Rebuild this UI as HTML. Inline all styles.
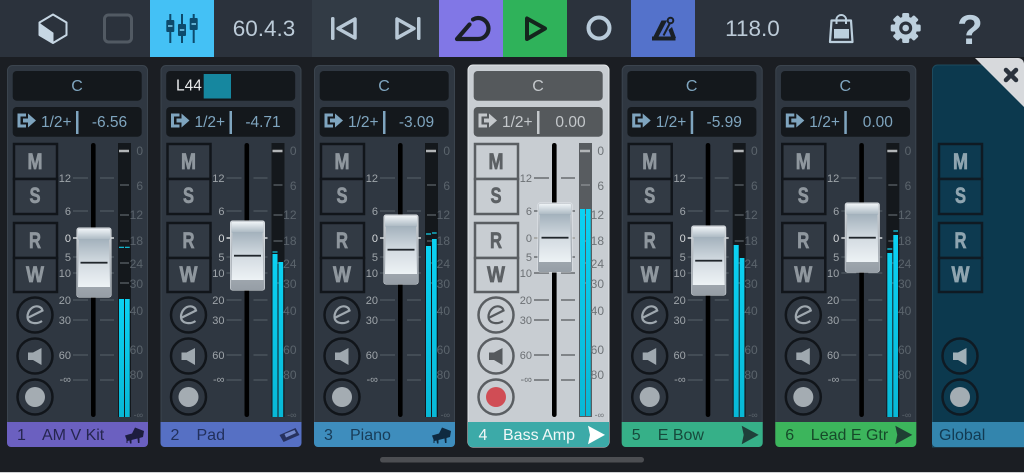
<!DOCTYPE html>
<html lang="en"><head><meta charset="utf-8"><title>Mixer</title>
<style>
html,body{margin:0;padding:0;background:#1b1e23;width:1024px;height:473px;overflow:hidden}
svg{display:block;font-family:"Liberation Sans",sans-serif}
.s{--bg:#2f3741;--edge:#3b444e;--box:#14181c;--txt:#7fa5bf;--tick:#4f5962;--z:#aeb3b7;--btn:#323a44;--ln:#11151a;--gl:#8f979e;--mtr:#14181c;--mt:#5c6369;--l:#9ea4a9;--r:#5b646c;--ic:#9fa8af;--bz:#a4acb2}
.sel{--bg:#c8cdd2;--edge:#e2e5e8;--box:#55595c;--txt:#c4c8cb;--tick:#54585c;--z:#a9aaa8;--btn:#c8cdd2;--ln:#5a5e62;--gl:#5c6064;--mtr:#585c60;--mt:#8f9396;--l:#6c7074;--r:#6f7478;--ic:#55595d;--bz:#d04d55}
.g{--bg:#0c394e;--edge:#1d4a5e;--btn:#0d3a50;--ln:#0f1a23;--gl:#8fa5b0;--ic:#9fb0b8;--bz:#a3adb3}
.l text{font-size:11px;fill:var(--l);text-anchor:end}
.r text{font-size:12px;fill:var(--r);text-anchor:end}
.c{font-size:16px;fill:var(--txt);text-anchor:middle}
.o{font-size:15.5px;fill:var(--txt)}
.v{font-size:15.5px;fill:var(--txt);text-anchor:middle}
.b text{font-size:22px;font-weight:bold;fill:var(--gl);stroke:var(--gl);stroke-width:.7px;text-anchor:middle}
.f{font-size:16px}
.tb{font-size:22.5px;fill:#bccbd8;text-anchor:middle}
</style></head><body>
<svg width="1024" height="473" viewBox="0 0 1024 473" xmlns="http://www.w3.org/2000/svg">
<defs>
<linearGradient id="gc" x1="0" y1="0" x2="0" y2="1"><stop offset="0" stop-color="#eef3f6"/><stop offset="1" stop-color="#a8b6c0"/></linearGradient>
<linearGradient id="gb" x1="0" y1="0" x2="0" y2="1"><stop offset="0" stop-color="#a3b1bc"/><stop offset=".5" stop-color="#d3dbe1"/><stop offset="1" stop-color="#edf2f5"/></linearGradient>
<linearGradient id="gf" x1="0" y1="0" x2="0" y2="1"><stop offset="0" stop-color="#ccd1d6"/><stop offset="1" stop-color="#969ea6"/></linearGradient>
<linearGradient id="gm" x1="0" y1="0" x2="0" y2="1"><stop offset="0" stop-color="#0bd2f3"/><stop offset="1" stop-color="#08b8d6"/></linearGradient>
<g id="ticks" stroke="var(--tick)" stroke-width="1.2" fill="none">
<path d="M73 178H88M100 178H114M73 211H88M100 211H114M73 257H88M100 257H114M73 273H88M100 273H114M73 300H88M100 300H114M73 320H88M100 320H114M73 355H88M100 355H114M73 380H88M100 380H114"/>
<path d="M73 238H88M100 238H114" stroke="var(--z)" stroke-width="2"/>
</g>
<g id="meter">
<rect x="118" y="143" width="13" height="274" fill="var(--mtr)"/>
<rect x="91" y="143" width="4.6" height="274" rx="2.3" fill="#000"/>
<path d="M119 151H129" stroke="#b2b5b7" stroke-width="2.5"/>
<path d="M120 185H129M120 215H129M120 241H129M120 263H129M120 283H129" stroke="var(--mt)" stroke-width="1.3"/>
</g>
<g id="box">
<rect x="12.7" y="71" width="129" height="29.7" rx="4" fill="var(--box)"/>
<rect x="12.7" y="107" width="129" height="29.7" rx="4" fill="var(--box)"/>
<path d="M26 115H19V126H26" fill="none" stroke="var(--txt)" stroke-width="3"/>
<path d="M23 118.500H28V113.500L36 120.500L28 127.500V122.500H23Z" fill="var(--txt)"/>
<rect x="76" y="111" width="2.500" height="23" fill="var(--txt)"/>
</g>
<g id="btns" fill="var(--btn)" stroke="var(--ln)" stroke-width="2.500">
<rect x="14" y="144" width="43" height="35"/><rect x="14" y="179" width="43" height="35"/>
<rect x="14" y="223" width="43" height="35"/><rect x="14" y="258" width="43" height="34"/>
</g>
<g id="eic"><circle cx="35" cy="315" r="17.500" fill="none" stroke="var(--ln)" stroke-width="2.500"/>
<path d="M27.500 318L42.500 310.500C41.500 306.500 37 305.500 33.500 307C28.500 309.500 26.500 315.500 28 319.500C30 323.500 37 324.500 42 321" fill="none" stroke="var(--ic)" stroke-width="2.200"/></g>
<g id="spk"><circle cx="35" cy="356" r="17.500" fill="none" stroke="var(--ln)" stroke-width="2.500"/>
<path d="M28 352.500H33L41.500 348V365L33 360H28Z" fill="var(--ic)"/></g>
<g id="rec"><circle cx="35" cy="397" r="17.500" fill="none" stroke="var(--ln)" stroke-width="2.500"/>
<circle cx="35" cy="397" r="10" fill="var(--bz)"/></g>
<g id="hd">
<rect x="-.5" y="-.5" width="35" height="70" rx="2.500" fill="#e3e8ec"/>
<rect x="0" y="0" width="34" height="69" rx="2" fill="url(#gf)"/>
<rect x="1" y="1" width="32" height="11" rx="1" fill="url(#gc)"/>
<path d="M2 11H32L33 59H1Z" fill="url(#gb)"/>
<rect x="3.500" y="33.800" width="27" height="1.800" fill="#20262b"/>
</g>
<path id="piano" d="M0 8.500L7 6.500L10 .5L19 4L18 10L14.500 11V16H13L12.500 11.500L6.500 13V16.500H5L4.500 13.500L2.500 14V16H1.500V12.500Z"/>
<path id="arrow" d="M0 0L17 9.200L0 18.500L2 9.200Z"/>
</defs>

<rect width="1024" height="473" fill="#1b1e23"/>
<!-- toolbar -->
<rect width="1024" height="57" fill="#2b323c"/>
<rect x="312" width="127" height="57" fill="#323b45"/>
<rect x="150" width="64" height="57" fill="#44c1f5"/>
<rect x="439" width="64" height="57" fill="#8177e6"/>
<rect x="503" width="64" height="57" fill="#2fb25a"/>
<rect x="631" width="64" height="57" fill="#5472cb"/>
<path d="M39.500 23.500L53 33V43L39.500 35Z" fill="#c6d6e3"/>
<path d="M53 14.500L66.500 22.500V35L53 43L39.500 35V22.500Z" fill="none" stroke="#c6d6e3" stroke-width="2" stroke-linejoin="round"/>
<path d="M39.500 23.500L53 33V43" fill="none" stroke="#c6d6e3" stroke-width="1"/>
<rect x="104.500" y="15" width="27" height="27" rx="4" fill="none" stroke="#525a63" stroke-width="3"/>
<path d="M170.300 14V43M182 14V43M193.700 14V43" stroke="#0d4a6c" stroke-width="2"/>
<g fill="#0d4a6c"><rect x="166.300" y="20" width="8" height="12" rx="1"/><rect x="178" y="24" width="8" height="12" rx="1"/><rect x="189.700" y="18" width="8" height="12" rx="1"/></g>
<path d="M168 26H172.500M179.800 30H184.300M191.500 24H196" stroke="#7ed0f2" stroke-width="1.500"/>
<text class="tb" x="264" y="36">60.4.3</text>
<rect x="331" y="17" width="3.500" height="23" rx="1.500" fill="#b8c8d6"/>
<path d="M338 28.500L355 19V38Z" fill="none" stroke="#b8c8d6" stroke-width="3.500" stroke-linejoin="round"/>
<rect x="417" y="17" width="3.500" height="23" rx="1.500" fill="#b8c8d6"/>
<path d="M397 19V38L414 28.500Z" fill="none" stroke="#b8c8d6" stroke-width="3.500" stroke-linejoin="round"/>
<path d="M457 39L469.500 24.500M473 19.500Q475.500 18 478 18A10.500 10.500 0 0 1 478 39H457" fill="none" stroke="#1a2026" stroke-width="4.200" stroke-linejoin="round" stroke-linecap="round"/>
<path d="M527 18.500V39L545 28.500Z" fill="none" stroke="#14251d" stroke-width="4" stroke-linejoin="round"/>
<circle cx="599" cy="28" r="10.500" fill="none" stroke="#b8cad9" stroke-width="4"/>
<path d="M652.500 38.500L661.500 20.500H667L657.500 38.500Z" fill="#1a2026"/><path d="M652 36.500H675.500V40.500H652Z" fill="#1a2026"/>
<path d="M672 27L676 38H671.500L668.500 30Z" fill="#1a2026"/>
<path d="M663.500 35.500L670 23" stroke="#1a2026" stroke-width="2"/>
<circle cx="670.500" cy="20.500" r="2.800" fill="none" stroke="#1a2026" stroke-width="2"/>
<text class="tb" x="752.500" y="36">118.0</text>
<path d="M831.500 20.500H851L852.500 42H830Z" fill="none" stroke="#bccfdd" stroke-width="2.200" stroke-linejoin="round"/>
<path d="M836.500 24V18.500A5 5 0 0 1 846 18.500V24" fill="none" stroke="#bccfdd" stroke-width="2"/>
<rect x="834" y="29" width="15" height="9.500" fill="#bccfdd"/>
<g fill="#bccfdd" transform="translate(905.700 28)">
<circle r="11.500"/>
<rect x="-3.500" y="-15" width="7" height="30" rx="1.500"/>
<rect x="-3.500" y="-15" width="7" height="30" rx="1.500" transform="rotate(45)"/>
<rect x="-3.500" y="-15" width="7" height="30" rx="1.500" transform="rotate(90)"/>
<rect x="-3.500" y="-15" width="7" height="30" rx="1.500" transform="rotate(135)"/>
<circle r="6.500" fill="#2b323c"/><circle r="3.300"/>
</g>
<text x="970" y="44" font-size="42" font-weight="bold" fill="#bccfdd" text-anchor="middle">?</text>

<!-- strip 1 -->
<g class="s">
<rect x="7.500" y="65.500" width="140" height="381" rx="5" fill="var(--bg)" stroke="var(--edge)"/>
<use href="#box"/><use href="#ticks"/><use href="#meter"/><use href="#btns"/><use href="#eic"/><use href="#spk"/><use href="#rec"/>
<text class="c" x="77" y="91">C</text><text class="o" x="41" y="127">1/2+</text><text class="v" x="109.500" y="127">-6.56</text>
<g class="b"><text x="35" y="169" textLength="15" lengthAdjust="spacingAndGlyphs">M</text><text x="35" y="203" textLength="11" lengthAdjust="spacingAndGlyphs">S</text><text x="35" y="248" textLength="12" lengthAdjust="spacingAndGlyphs">R</text><text x="35" y="282" textLength="18" lengthAdjust="spacingAndGlyphs">W</text></g>
<g class="l" transform="translate(71)"><text y="182">12</text><text y="215">6</text><text y="242" style="fill:#d5d8da">0</text><text y="261">5</text><text y="277">10</text><text y="304">20</text><text y="324">30</text><text y="359">60</text><text y="383">-∞</text></g>
<g class="r" transform="translate(143)"><text y="155">0</text><text y="190">6</text><text y="219">12</text><text y="245">18</text><text y="268">24</text><text y="288">30</text><text y="315">40</text><text y="354">60</text><text y="379">80</text><text y="418" style="font-size:9px">-∞</text></g>
<rect x="119" y="299" width="5" height="118" fill="url(#gm)"/><rect x="125" y="299" width="4.700" height="118" fill="url(#gm)"/>
<path d="M119 247.300H124M125 247.300H129.700" stroke="#15cde8" stroke-width="1.200"/>
<use href="#hd" x="77" y="228"/>
<path d="M7 422H148V443a4 4 0 0 1-4 4H11a4 4 0 0 1-4-4Z" fill="#6b60c0"/>
<text class="f" x="17" y="440" fill="#262650">1</text><text class="f" x="42" y="440" fill="#262650">AM V Kit</text>
<use href="#piano" x="125" y="427" fill="#1d1d3e"/>
</g>

<!-- strip 2 -->
<g class="s" transform="translate(153.500)">
<rect x="7.500" y="65.500" width="140" height="381" rx="5" fill="var(--bg)" stroke="var(--edge)"/>
<use href="#box"/><use href="#ticks"/><use href="#meter"/><use href="#btns"/><use href="#eic"/><use href="#spk"/><use href="#rec"/>
<text x="22.500" y="90.500" font-size="15.500" fill="#e8eaec">L44</text><rect x="50.200" y="74" width="27.300" height="24.500" fill="#16879f"/>
<text class="o" x="41" y="127">1/2+</text><text class="v" x="109.500" y="127">-4.71</text>
<g class="b"><text x="35" y="169" textLength="15" lengthAdjust="spacingAndGlyphs">M</text><text x="35" y="203" textLength="11" lengthAdjust="spacingAndGlyphs">S</text><text x="35" y="248" textLength="12" lengthAdjust="spacingAndGlyphs">R</text><text x="35" y="282" textLength="18" lengthAdjust="spacingAndGlyphs">W</text></g>
<g class="l" transform="translate(71)"><text y="182">12</text><text y="215">6</text><text y="242" style="fill:#d5d8da">0</text><text y="261">5</text><text y="277">10</text><text y="304">20</text><text y="324">30</text><text y="359">60</text><text y="383">-∞</text></g>
<g class="r" transform="translate(143)"><text y="155">0</text><text y="190">6</text><text y="219">12</text><text y="245">18</text><text y="268">24</text><text y="288">30</text><text y="315">40</text><text y="354">60</text><text y="379">80</text><text y="418" style="font-size:9px">-∞</text></g>
<rect x="119" y="254" width="5" height="163" fill="url(#gm)"/><rect x="125" y="262" width="4.700" height="155" fill="url(#gm)"/>
<path d="M119 252H124" stroke="#15cde8" stroke-width="1.200"/>
<use href="#hd" x="77" y="221"/>
<path d="M7 422H148V443a4 4 0 0 1-4 4H11a4 4 0 0 1-4-4Z" fill="#5670c4"/>
<text class="f" x="17" y="440" fill="#22305c">2</text><text class="f" x="43" y="440" fill="#22305c">Pad</text>
<path d="M126 435L142 428L146 435L130 442Z" fill="#27325f"/><path d="M131 434L141 430L142.500 433L132.500 437.500Z" fill="#7186c8"/>
</g>

<!-- strip 3 -->
<g class="s" transform="translate(307)">
<rect x="7.500" y="65.500" width="140" height="381" rx="5" fill="var(--bg)" stroke="var(--edge)"/>
<use href="#box"/><use href="#ticks"/><use href="#meter"/><use href="#btns"/><use href="#eic"/><use href="#spk"/><use href="#rec"/>
<text class="c" x="77" y="91">C</text><text class="o" x="41" y="127">1/2+</text><text class="v" x="109.500" y="127">-3.09</text>
<g class="b"><text x="35" y="169" textLength="15" lengthAdjust="spacingAndGlyphs">M</text><text x="35" y="203" textLength="11" lengthAdjust="spacingAndGlyphs">S</text><text x="35" y="248" textLength="12" lengthAdjust="spacingAndGlyphs">R</text><text x="35" y="282" textLength="18" lengthAdjust="spacingAndGlyphs">W</text></g>
<g class="l" transform="translate(71)"><text y="182">12</text><text y="215">6</text><text y="242" style="fill:#d5d8da">0</text><text y="261">5</text><text y="277">10</text><text y="304">20</text><text y="324">30</text><text y="359">60</text><text y="383">-∞</text></g>
<g class="r" transform="translate(143)"><text y="155">0</text><text y="190">6</text><text y="219">12</text><text y="245">18</text><text y="268">24</text><text y="288">30</text><text y="315">40</text><text y="354">60</text><text y="379">80</text><text y="418" style="font-size:9px">-∞</text></g>
<rect x="119" y="246" width="5" height="171" fill="url(#gm)"/><rect x="125" y="239" width="4.700" height="178" fill="url(#gm)"/>
<path d="M119 234H124M125 233H129.700" stroke="#15cde8" stroke-width="1.200"/>
<use href="#hd" x="77" y="215"/>
<path d="M7 422H148V443a4 4 0 0 1-4 4H11a4 4 0 0 1-4-4Z" fill="#3e8dbd"/>
<text class="f" x="17" y="440" fill="#183c58">3</text><text class="f" x="43" y="440" fill="#183c58">Piano</text>
<use href="#piano" x="125" y="427" fill="#0f2a40"/>
</g>

<!-- strip 4 selected -->
<g class="s sel" transform="translate(461)">
<rect x="7" y="65" width="141" height="382" rx="5" fill="var(--bg)" stroke="var(--edge)"/>
<use href="#box"/><use href="#ticks"/><use href="#meter"/><use href="#btns"/>
<use href="#eic"/><use href="#spk"/><use href="#rec"/>
<text class="c" x="77" y="91">C</text><text class="o" x="41" y="127">1/2+</text><text class="v" x="109.500" y="127">0.00</text>
<g class="b"><text x="35" y="169" textLength="15" lengthAdjust="spacingAndGlyphs">M</text><text x="35" y="203" textLength="11" lengthAdjust="spacingAndGlyphs">S</text><text x="35" y="248" textLength="12" lengthAdjust="spacingAndGlyphs">R</text><text x="35" y="282" textLength="18" lengthAdjust="spacingAndGlyphs">W</text></g>
<g class="l" transform="translate(71)"><text y="182">12</text><text y="215">6</text><text y="242">0</text><text y="261">5</text><text y="277">10</text><text y="304">20</text><text y="324">30</text><text y="359">60</text><text y="383">-∞</text></g>
<g class="r" transform="translate(143)"><text y="155">0</text><text y="190">6</text><text y="219">12</text><text y="245">18</text><text y="268">24</text><text y="288">30</text><text y="315">40</text><text y="354">60</text><text y="379">80</text><text y="418" style="font-size:9px">-∞</text></g>
<rect x="119" y="209" width="5" height="207" fill="url(#gm)"/><rect x="125" y="209" width="4.700" height="207" fill="url(#gm)"/>
<use href="#hd" x="77" y="203"/>
<path d="M7 422H148V443a4 4 0 0 1-4 4H11a4 4 0 0 1-4-4Z" fill="#3caaa8"/>
<text class="f" x="17.500" y="440" fill="#f2f8f8">4</text><text class="f" x="42" y="440" fill="#f2f8f8">Bass Amp</text>
<use href="#arrow" x="127" y="425.700" fill="#fff"/>
</g>

<!-- strip 5 -->
<g class="s" transform="translate(614.700)">
<rect x="7.500" y="65.500" width="140" height="381" rx="5" fill="var(--bg)" stroke="var(--edge)"/>
<use href="#box"/><use href="#ticks"/><use href="#meter"/><use href="#btns"/><use href="#eic"/><use href="#spk"/><use href="#rec"/>
<text class="c" x="77" y="91">C</text><text class="o" x="41" y="127">1/2+</text><text class="v" x="109.500" y="127">-5.99</text>
<g class="b"><text x="35" y="169" textLength="15" lengthAdjust="spacingAndGlyphs">M</text><text x="35" y="203" textLength="11" lengthAdjust="spacingAndGlyphs">S</text><text x="35" y="248" textLength="12" lengthAdjust="spacingAndGlyphs">R</text><text x="35" y="282" textLength="18" lengthAdjust="spacingAndGlyphs">W</text></g>
<g class="l" transform="translate(71)"><text y="182">12</text><text y="215">6</text><text y="242" style="fill:#d5d8da">0</text><text y="261">5</text><text y="277">10</text><text y="304">20</text><text y="324">30</text><text y="359">60</text><text y="383">-∞</text></g>
<g class="r" transform="translate(143)"><text y="155">0</text><text y="190">6</text><text y="219">12</text><text y="245">18</text><text y="268">24</text><text y="288">30</text><text y="315">40</text><text y="354">60</text><text y="379">80</text><text y="418" style="font-size:9px">-∞</text></g>
<rect x="119" y="245" width="5" height="172" fill="url(#gm)"/><rect x="125" y="258" width="4.700" height="159" fill="url(#gm)"/>
<use href="#hd" x="77" y="226"/>
<path d="M7 422H148V443a4 4 0 0 1-4 4H11a4 4 0 0 1-4-4Z" fill="#36b088"/>
<text class="f" x="17" y="440" fill="#174a3c">5</text><text class="f" x="43" y="440" fill="#174a3c">E Bow</text>
<use href="#arrow" x="127" y="425.700" fill="#1f3f3a"/>
</g>

<!-- strip 6 -->
<g class="s" transform="translate(768.300)">
<rect x="7.500" y="65.500" width="140" height="381" rx="5" fill="var(--bg)" stroke="var(--edge)"/>
<use href="#box"/><use href="#ticks"/><use href="#meter"/><use href="#btns"/><use href="#eic"/><use href="#spk"/><use href="#rec"/>
<text class="c" x="77" y="91">C</text><text class="o" x="41" y="127">1/2+</text><text class="v" x="109.500" y="127">0.00</text>
<g class="b"><text x="35" y="169" textLength="15" lengthAdjust="spacingAndGlyphs">M</text><text x="35" y="203" textLength="11" lengthAdjust="spacingAndGlyphs">S</text><text x="35" y="248" textLength="12" lengthAdjust="spacingAndGlyphs">R</text><text x="35" y="282" textLength="18" lengthAdjust="spacingAndGlyphs">W</text></g>
<g class="l" transform="translate(71)"><text y="182">12</text><text y="215">6</text><text y="242" style="fill:#d5d8da">0</text><text y="261">5</text><text y="277">10</text><text y="304">20</text><text y="324">30</text><text y="359">60</text><text y="383">-∞</text></g>
<g class="r" transform="translate(143)"><text y="155">0</text><text y="190">6</text><text y="219">12</text><text y="245">18</text><text y="268">24</text><text y="288">30</text><text y="315">40</text><text y="354">60</text><text y="379">80</text><text y="418" style="font-size:9px">-∞</text></g>
<rect x="119" y="253" width="5" height="164" fill="url(#gm)"/><rect x="125" y="235" width="4.700" height="182" fill="url(#gm)"/>
<path d="M119 249H124M125 231H129.700" stroke="#15cde8" stroke-width="1.200"/>
<use href="#hd" x="77" y="203"/>
<path d="M7 422H148V443a4 4 0 0 1-4 4H11a4 4 0 0 1-4-4Z" fill="#3cb55c"/>
<text class="f" x="17" y="440" fill="#174a2a">6</text><text class="f" x="42.500" y="440" fill="#174a2a">Lead E Gtr</text>
<use href="#arrow" x="127" y="425.700" fill="#1f3f34"/>
</g>

<!-- global -->
<g class="s g" transform="translate(925)">
<path d="M7.500 447V70a5 5 0 0 1 5-5H110V447Z" fill="var(--bg)" stroke="var(--edge)"/>
<use href="#btns"/>
<use href="#spk"/><use href="#rec"/>
<g class="b"><text x="35.500" y="169" textLength="15" lengthAdjust="spacingAndGlyphs">M</text><text x="35.500" y="203" textLength="11" lengthAdjust="spacingAndGlyphs">S</text><text x="35.500" y="248" textLength="12" lengthAdjust="spacingAndGlyphs">R</text><text x="35.500" y="282" textLength="18" lengthAdjust="spacingAndGlyphs">W</text></g>
<path d="M7 422H110V447H11a4 4 0 0 1-4-4Z" fill="#3385ad"/>
<text class="f" x="14" y="440" fill="#123a52">Global</text>
</g>
<path d="M975 58H1018a6 6 0 0 1 6 6V107Z" fill="#d7d9dc"/>
<path d="M1006 70L1016 80M1016 70L1006 80" stroke="#2b323c" stroke-width="4.500" stroke-linecap="round"/>

<rect x="380" y="457" width="264" height="5.500" rx="2.700" fill="#4c4e52"/>
<rect x="0" y="472" width="1024" height="1" fill="#cfd1d3"/>
</svg>
</body></html>
